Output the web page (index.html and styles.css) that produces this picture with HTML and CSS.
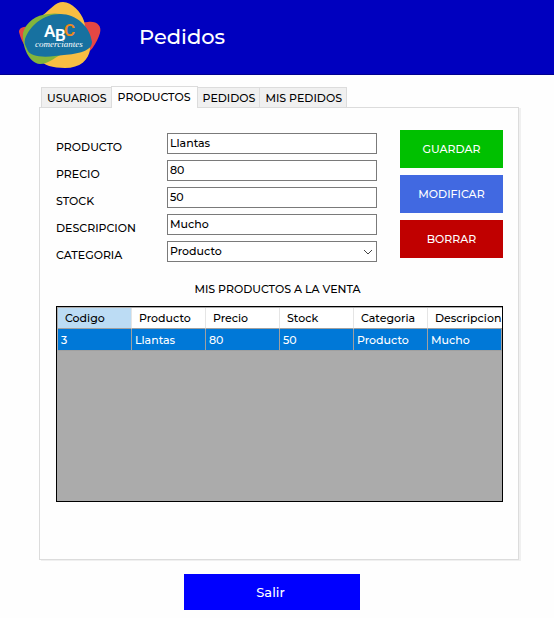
FILE: index.html
```html
<!DOCTYPE html>
<html lang="es">
<head>
<meta charset="utf-8">
<title>Pedidos</title>
<meta name="viewport" content="width=device-width, initial-scale=1">
<link rel="stylesheet" href="styles.css">
</head>
<body>
<header class="topbar">
  <svg class="logo" viewBox="0 0 84 70" role="img" aria-label="ABC comerciantes">
    <path fill="#e54744" d="M1 30C1 25 6 24 14 25L70 20C79 19 84 24 82 31C79 41 72 52 61 57L24 56C11 53 4 42 1 30Z"/>
    <path fill="#f8be43" d="M25 13C32 8 37 0 45 0C54 0 63 10 66 19L72 47C71 58 62 66 47 66C35 66 25 63 22 58Z"/>
    <path fill="#83b53c" d="M5 31C8 20 18 13 30 12C36 11 43 11 48 14L50 49C38 54 31 62 22 62C11 61 4 45 5 31Z"/>
    <path fill="#1771a0" d="M7 37C12 23 26 12 42 12C59 12 72 25 74 40C74 49 60 52 46 53C32 55 12 57 9 47C7 43 6 41 7 37Z"/>
    <text class="logo-letters" x="26 37 46" y="35 39 34" fill="#fff">AB<tspan fill="#f08a1c">C</tspan></text>
    <text class="logo-script" x="17" y="45" fill="#fff">comerciantes</text>
  </svg>
  <h1 class="title">Pedidos</h1>
</header>
<main class="page">
  <div class="tabs" role="tablist">
    <button class="tab" type="button" role="tab">USUARIOS</button>
    <button class="tab tab-active" type="button" role="tab" aria-selected="true" aria-controls="productos">PRODUCTOS</button>
    <button class="tab" type="button" role="tab">PEDIDOS</button>
    <button class="tab" type="button" role="tab">MIS PEDIDOS</button>
  </div>
  <section class="panel" id="productos" role="tabpanel">
    <form class="editor">
      <div class="fields">
        <label class="label" for="producto">PRODUCTO</label>
        <input class="field" id="producto" type="text" value="Llantas">
        <label class="label" for="precio">PRECIO</label>
        <input class="field" id="precio" type="text" value="80">
        <label class="label" for="stock">STOCK</label>
        <input class="field" id="stock" type="text" value="50">
        <label class="label" for="descripcion">DESCRIPCION</label>
        <input class="field" id="descripcion" type="text" value="Mucho">
        <label class="label" for="categoria">CATEGORIA</label>
        <div class="select-wrap">
          <select class="field" id="categoria"><option>Producto</option></select>
          <svg class="chevron" viewBox="0 0 10 6" aria-hidden="true"><path d="M1 1L5 5L9 1" fill="none" stroke="#444"/></svg>
        </div>
      </div>
      <div class="actions">
        <button class="action save" type="button">GUARDAR</button>
        <button class="action edit" type="button">MODIFICAR</button>
        <button class="action delete" type="button">BORRAR</button>
      </div>
    </form>
    <h2 class="subtitle">MIS PRODUCTOS A LA VENTA</h2>
    <div class="grid-box">
      <table class="grid">
        <thead>
          <tr><th class="current">Codigo</th><th>Producto</th><th>Precio</th><th>Stock</th><th>Categoria</th><th>Descripcion</th></tr>
        </thead>
        <tbody>
          <tr><td>3</td><td>Llantas</td><td>80</td><td>50</td><td>Producto</td><td>Mucho</td></tr>
        </tbody>
      </table>
    </div>
  </section>
  <footer class="footer">
    <button class="exit" type="button">Salir</button>
  </footer>
</main>
</body>
</html>
```
FILE: styles.css
```css
* { box-sizing: border-box; }

body {
  margin: 0;
  background: #fefefe;
  color: #000;
  font: 500 11px/14px Montserrat, Inter, "Open Sans", sans-serif;
}

button, input, select { font: inherit; }

.topbar {
  display: flex;
  align-items: center;
  gap: 37px;
  height: 75px;
  padding: 0 18px;
  background: #0000bf;
  border-bottom: 1px solid #000090;
}

.logo { width: 84px; height: 70px; }
.logo-letters { font: 600 17px Roboto, sans-serif; }
.logo-script { font: italic 400 9px "Liberation Serif", serif; }

.title {
  margin: 0;
  color: #fff;
  font-size: 21px;
  line-height: 28px;
  font-weight: 500;
}

.page { padding: 11px 35px 8px 39px; }

.tabs {
  display: flex;
  align-items: flex-end;
  padding-left: 2px;
}

.tab {
  height: 20px;
  padding: 0 4px 0 5px;
  border: 1px solid #dcdcdc;
  border-right-width: 0;
  border-bottom-width: 0;
  background: #f0f0f0;
  color: #000;
}

.tab:last-child { border-right-width: 1px; }

.tab-active {
  position: relative;
  height: 22px;
  margin-bottom: -1px;
  padding: 0 6px 2px;
  border-right-width: 1px;
  background: #fefefe;
}

.tab-active + .tab { border-left-width: 0; }

.panel {
  padding: 22px 15px 57px 16px;
  border: 1px solid #dcdcdc;
  box-shadow: 2px 1px 0 #f0f0f0;
}

.editor {
  display: grid;
  grid-template-columns: 1fr 103px;
  gap: 23px;
}

.fields {
  display: grid;
  grid-template-columns: 111px 1fr;
  row-gap: 6px;
  align-content: start;
  padding-top: 3px;
}

.label { padding-top: 7px; height: 21px; }

.field {
  display: block;
  width: 100%;
  height: 21px;
  margin: 0;
  padding: 0 2px 2px;
  border: 1px solid #7a7a7a;
  border-radius: 0;
  background: #fff;
  color: #000;
  appearance: none;
}

.select-wrap { position: relative; }

.chevron {
  position: absolute;
  right: 4px;
  top: 8px;
  width: 10px;
  height: 6px;
  pointer-events: none;
}

.actions {
  display: grid;
  gap: 7px;
  align-content: start;
}

.action {
  height: 38px;
  padding: 0;
  border: 0;
  color: #fff;
}

.save { background: #00c000; }
.edit { background: #4169e1; }
.delete { background: #c00000; }

.subtitle {
  margin: 20px 0 10px;
  padding-right: 4px;
  font-size: 11px;
  line-height: 14px;
  font-weight: 500;
  text-align: center;
}

.grid-box {
  min-height: 196px;
  padding: 1px 0 0 1px;
  border: 1px solid #000;
  background: #ababab;
}

.grid {
  width: 100%;
  table-layout: fixed;
  border-collapse: separate;
  border-spacing: 0;
}

.grid th, .grid td {
  padding: 0 3px;
  border-right: 1px solid #a0a0a0;
  border-bottom: 1px solid #a0a0a0;
  font-weight: 500;
  text-align: left;
  white-space: nowrap;
}

.grid th {
  height: 21px;
  padding: 0 0 0 7px;
  border-right-color: #e5e5e5;
  background: #fff;
}

.grid th:last-child { border-right: 0; }

.grid th.current { background: #bcdcf4; }
.grid td { height: 22px; background: #0078d7; color: #fff; }

.footer {
  display: flex;
  justify-content: center;
  padding: 14px 14px 0 0;
}

.exit {
  width: 176px;
  height: 36px;
  padding: 0 8px 0 5px;
  border: 0;
  background: #0000ff;
  color: #fff;
  font-size: 13px;
}
```
